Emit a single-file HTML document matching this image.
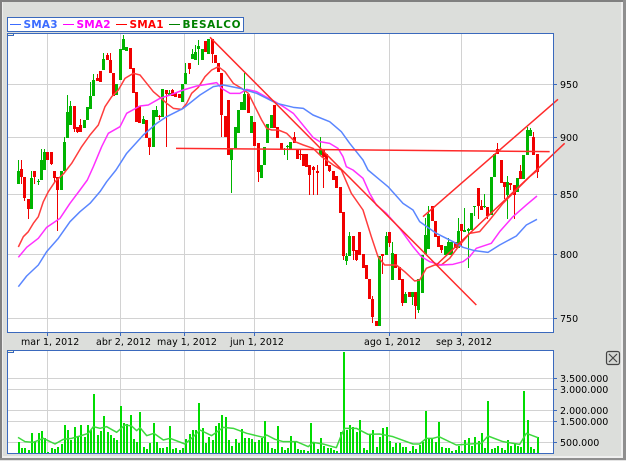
<!DOCTYPE html>
<html><head><meta charset="utf-8"><style>
html,body{margin:0;padding:0;width:626px;height:461px;overflow:hidden;background:#dcdedb}
svg{display:block}
text{font-family:"DejaVu Sans",sans-serif;font-size:9.5px;fill:#000}
.l text{font-size:10.5px;font-weight:bold}
</style></head><body>
<svg width="626" height="461" viewBox="0 0 626 461" xmlns="http://www.w3.org/2000/svg">
<rect width="626" height="461" fill="#dcdedb"/>
<g shape-rendering="crispEdges">
<rect x="0" y="0" width="626" height="2" fill="#808080"/>
<rect x="0" y="0" width="2" height="460" fill="#808080"/>
<rect x="2" y="2" width="1" height="455" fill="#eeeeee"/>
<rect x="621" y="2" width="2" height="456" fill="#efefef"/>
<rect x="623" y="0" width="3" height="460" fill="#8f8f8f"/>
<rect x="2" y="456" width="621" height="2" fill="#efefef"/>
<rect x="0" y="458" width="626" height="2" fill="#8f8f8f"/>
<rect x="0" y="460" width="626" height="1" fill="#e4e4e4"/>
<!-- legend -->
<rect x="7.5" y="17.5" width="236" height="14" fill="#fff" stroke="#3a69bd"/>
<!-- main panel -->
<rect x="7.5" y="33.5" width="546" height="298.5" fill="#fff"/>
<rect x="7.5" y="350.5" width="546" height="103" fill="#fff"/>
<path stroke="#d2d2d2" fill="none" d="M47.5 34V332M120.5 34V332M184.5 34V332M254.5 34V332M389.5 34V332M461.5 34V332M8 84.5H553M8 137.5H553M8 194.5H553M8 254.5H553M8 318.5H553"/>
<path stroke="#d2d2d2" fill="none" d="M47.5 351V453M120.5 351V453M184.5 351V453M254.5 351V453M389.5 351V453M461.5 351V453M8 378.5H553M8 389.5H553M8 410.5H553M8 421.5H553M8 442.5H553"/>
<!-- volume bars -->
<path stroke="#00dc00" stroke-width="2" fill="none" d="M19 453V442M22 453V448M25 453V448M29 453V450M32 453V433M35 453V441M39 453V433M42 453V431M45 453V438M48 453V452M52 453V448M55 453V449M58 453V447M62 453V444M65 453V425M68 453V430M71 453V440M75 453V427M78 453V437M81 453V425M85 453V437M88 453V425M91 453V430M94 453V394M98 453V435M101 453V431M104 453V416M108 453V432M111 453V435M114 453V438M117 453V440M121 453V406M124 453V423M127 453V424M131 453V415M134 453V439M137 453V442M140 453V412M144 453V447M147 453V449M150 453V443M154 453V423M157 453V442M160 453V448M163 453V448M167 453V447M170 453V426M173 453V449M176 453V448M180 453V450M183 453V448M186 453V439M190 453V434M193 453V430M196 453V430M199 453V403M203 453V428M206 453V443M209 453V437M213 453V440M216 453V426M219 453V423M222 453V415M226 453V417M229 453V440M232 453V446M236 453V439M239 453V443M242 453V429M245 453V438M249 453V438M252 453V439M255 453V442M259 453V440M262 453V438M265 453V421M268 453V442M272 453V448M275 453V449M278 453V426M282 453V447M285 453V450M288 453V448M291 453V436M295 453V442M298 453V449M301 453V450M304 453V450M308 453V451M311 453V423M314 453V442M318 453V449M321 453V438M324 453V446M328 453V448M331 453V448M334 453V450M337 453V451M341 453V432M344 453V352M347 453V430M350 453V425M353 453V427M357 453V432M360 453V420M364 453V448M367 453V450M370 453V434M373 453V430M377 453V447M380 453V437M383 453V428M387 453V427M390 453V441M393 453V447M396 453V443M400 453V443M403 453V447M406 453V447M410 453V451M413 453V446M416 453V449M420 453V445M423 453V442M426 453V411M429 453V438M432 453V438M436 453V442M439 453V422M442 453V447M446 453V448M449 453V448M452 453V451M456 453V450M459 453V446M462 453V451M465 453V440M469 453V438M472 453V446M475 453V437M479 453V441M482 453V433M485 453V448M488 453V401M492 453V449M495 453V448M498 453V446M502 453V448M505 453V450M508 453V440M511 453V446M515 453V443M518 453V446M521 453V447M524 453V391M528 453V420M531 453V447M534 453V449M538 453V437"/>
<!-- wicks green -->
<path stroke="#00b400" stroke-width="1" fill="none" d="M18.5 160V184M31.5 171V209M38.5 179V185M41.5 149V180M44.5 149V170M61.5 171V190M64.5 137V171M67.5 95V138M70.5 101V125M84.5 120V128M87.5 107V120M90.5 82V109M93.5 74V96M103.5 53V70M116.5 84V95M120.5 49V80M123.5 35V50M126.5 47V51M143.5 116V124M153.5 110V147M156.5 106V117M162.5 89V117M169.5 90V95M182.5 84V102M185.5 63V84M192.5 49V59M195.5 45V60M198.5 40V65M202.5 49V60M208.5 39V54M231.5 148V193M235.5 127V148M238.5 110V133M241.5 102V110M244.5 73V110M251.5 116V133M261.5 165V178M264.5 147V165M267.5 124V143M271.5 115V128M284.5 148V155M287.5 145V160M290.5 142V149M320.5 137V155M346.5 253V265M349.5 232V256M379.5 256V326M386.5 232V255M392.5 242V280M405.5 292V303M412.5 292V305M418.5 279V313M422.5 255V293M425.5 218V254M428.5 206V249M445.5 246V255M448.5 238V255M451.5 242V255M458.5 218V248M464.5 208V232M468.5 228V268M471.5 213V230M474.5 206V216M484.5 194V208M491.5 177V215M494.5 154V177M507.5 176V219M517.5 178V192M523.5 155V179M527.5 127V155M530.5 128V136"/>
<!-- bodies green -->
<path stroke="#00b400" stroke-width="3" fill="none" d="M18.5 171V184M31.5 178V209M38.5 181V182M41.5 160V180M44.5 152V170M61.5 171V190M64.5 142V171M67.5 112V138M70.5 106V125M84.5 120V128M87.5 107V120M90.5 96V109M93.5 80V96M103.5 59V70M116.5 84V95M120.5 49V80M123.5 39V50M126.5 47V51M143.5 119V124M153.5 110V147M156.5 110V117M162.5 89V117M169.5 93V95M182.5 84V102M185.5 73V84M192.5 54V59M195.5 52V60M198.5 46V49M202.5 49V60M208.5 39V54M231.5 148V160M235.5 127V148M238.5 110V133M241.5 102V110M244.5 94V110M251.5 116V133M261.5 165V178M264.5 147V165M267.5 124V143M271.5 115V128M284.5 149V150M287.5 146V147M290.5 142V149M320.5 149V155M346.5 256V261M349.5 236V256M379.5 256V326M386.5 236V255M392.5 253V280M405.5 294V303M412.5 292V297M418.5 279V310M422.5 255V293M425.5 235V254M428.5 214V249M445.5 246V255M448.5 242V255M451.5 242V255M458.5 231V248M464.5 230V232M468.5 229V231M471.5 213V230M474.5 206V207M484.5 206V207M491.5 177V215M494.5 154V177M507.5 182V195M517.5 178V192M523.5 155V179M527.5 130V155M530.5 130V136"/>
<!-- wicks red -->
<path stroke="#f00000" stroke-width="1" fill="none" d="M21.5 160V184M24.5 177V201M28.5 199V219M34.5 171V184M47.5 152V160M51.5 152V165M54.5 171V183M57.5 177V231M74.5 106V132M77.5 127V133M80.5 119V132M97.5 74V81M100.5 71V82M107.5 53V60M110.5 53V73M113.5 73V96M130.5 48V69M133.5 68V93M136.5 92V122M139.5 106V123M146.5 120V138M149.5 138V155M159.5 115V120M166.5 90V147M172.5 89V96M175.5 93V97M179.5 94V98M189.5 63V74M205.5 41V52M212.5 39V63M215.5 55V63M218.5 63V72M221.5 73V137M225.5 116V137M228.5 100V155M248.5 94V113M254.5 122V146M258.5 143V182M274.5 105V128M277.5 127V138M281.5 143V149M294.5 132V143M297.5 149V159M300.5 150V160M303.5 154V166M306.5 154V167M309.5 165V195M313.5 166V195M317.5 165V195M323.5 149V188M326.5 154V166M329.5 165V172M333.5 171V180M336.5 176V188M340.5 187V213M343.5 212V260M353.5 236V260M356.5 250V261M359.5 232V255M363.5 254V268M366.5 265V279M369.5 279V299M372.5 296V323M376.5 321V326M382.5 254V274M389.5 232V247M395.5 254V268M399.5 267V280M402.5 279V306M409.5 292V297M415.5 292V319M432.5 206V221M435.5 221V237M438.5 236V247M441.5 245V253M455.5 242V248M461.5 224V246M478.5 188V219M481.5 200V210M487.5 207V219M497.5 143V154M501.5 160V183M504.5 182V199M510.5 183V190M514.5 185V219M520.5 165V179M533.5 132V155M537.5 154V178"/>
<!-- bodies red -->
<path stroke="#f00000" stroke-width="3" fill="none" d="M21.5 169V177M24.5 177V198M28.5 199V209M34.5 171V177M47.5 152V160M51.5 152V164M54.5 171V178M57.5 177V190M74.5 106V129M77.5 127V132M80.5 125V132M97.5 78V81M100.5 71V82M107.5 55V60M110.5 60V73M113.5 73V96M130.5 48V69M133.5 68V93M136.5 92V122M139.5 106V123M146.5 120V138M149.5 138V147M159.5 116V117M166.5 90V94M172.5 90V96M175.5 93V97M179.5 94V98M189.5 63V69M205.5 41V52M212.5 39V54M215.5 55V63M218.5 63V72M221.5 73V115M225.5 116V137M228.5 100V155M248.5 94V113M254.5 122V146M258.5 143V172M274.5 105V128M277.5 127V138M281.5 143V149M294.5 137V143M297.5 149V159M300.5 154V155M303.5 154V166M306.5 154V167M309.5 165V175M313.5 167V170M317.5 171V173M323.5 149V157M326.5 154V166M329.5 165V171M333.5 171V180M336.5 176V188M340.5 187V213M343.5 212V256M353.5 236V251M356.5 250V260M359.5 232V255M363.5 254V268M366.5 265V279M369.5 279V299M372.5 299V317M376.5 321V326M382.5 254V256M389.5 232V243M395.5 254V268M399.5 267V280M402.5 279V303M409.5 292V297M415.5 292V306M432.5 206V221M435.5 221V237M438.5 236V247M441.5 245V250M455.5 242V248M461.5 224V231M478.5 188V206M481.5 206V210M487.5 207V216M497.5 149V154M501.5 160V183M504.5 182V187M510.5 183V185M514.5 185V195M520.5 171V179M533.5 137V155M537.5 154V172"/>
</g>
<!-- lines -->
<g transform="scale(.33333)" fill="none" stroke-width="4.5" stroke-linejoin="round">
<g stroke="#ff3c3c">
<polyline points="55,741 70,710 85,695 100,670 115,650 130,605 145,575 165,545 190,522 215,490 245,440 270,405 295,375 315,320 335,290 355,270 375,235 400,220 420,225 440,250 460,275 480,292 500,310 520,325 545,328 560,310 575,280 595,262 615,230 635,210 655,200 675,215 700,250 725,265 745,280 765,320 785,360 800,385 815,390 835,390 860,400 885,425 910,435 939,445 965,470 1000,495 1024,510 1054,580 1089,630 1114,710 1134,770 1154,795 1189,795 1214,815 1244,843 1259,840 1279,805 1304,795 1324,795 1349,775 1379,735 1409,700 1439,695 1469,660 1509,610 1549,570 1589,530 1614,510"/>
</g>
<g stroke="#ff30ff">
<polyline points="55,772 80,742 115,715 140,682 180,655 210,610 240,570 262,540 280,500 305,440 325,400 360,380 380,340 420,318 445,315 480,295 510,285 550,270 590,258 620,253 650,248 665,265 690,280 720,280 740,268 770,275 800,292 825,305 850,320 880,340 939,412 959,425 989,430 1014,445 1029,470 1039,500 1059,510 1089,535 1109,580 1129,615 1159,640 1199,685 1239,740 1264,770 1289,785 1324,795 1359,793 1389,785 1409,770 1429,745 1474,730 1499,695 1539,650 1579,615 1611,588"/>
</g>
<g stroke="#5a86ff">
<polyline points="55,860 80,828 115,795 140,755 175,715 210,665 240,635 270,610 300,575 320,545 348,510 380,460 430,405 470,370 500,350 550,325 600,285 640,260 670,255 720,265 770,280 830,310 880,322 910,325 939,345 989,365 1024,395 1049,430 1089,480 1104,510 1164,560 1209,610 1239,630 1259,665 1309,700 1359,725 1389,742 1424,752 1464,757 1499,735 1549,708 1579,675 1611,658"/>
</g>
<g stroke="#ff2a2a">
<line x1="630" y1="112" x2="1429" y2="915"/>
<line x1="528" y1="445" x2="1649" y2="455"/>
<line x1="1269" y1="650" x2="1674" y2="298"/>
<line x1="1309" y1="795" x2="1694" y2="430"/>
</g>
<g stroke="#3ed83e">
<polyline points="54,1312 75,1325 100,1327 130,1315 165,1332 190,1318 215,1315 240,1308 265,1300 280,1280 300,1285 320,1280 350,1297 375,1275 395,1278 410,1292 420,1283 440,1307 462,1300 490,1320 510,1315 555,1332 580,1310 600,1290 635,1307 670,1282 700,1285 740,1300 790,1312 800,1305 825,1318 850,1325 890,1325 925,1340 939,1327 969,1332 1009,1343 1024,1305 1034,1285 1069,1285 1104,1303 1139,1302 1179,1310 1239,1332 1259,1332 1279,1315 1299,1315 1317,1310 1369,1335 1409,1332 1444,1330 1464,1308 1509,1325 1559,1333 1579,1300 1614,1313"/>
</g>
</g>
<g shape-rendering="crispEdges">
<rect x="7" y="33" width="547" height="1" fill="#3a69bd"/>
<rect x="7" y="33" width="1" height="300" fill="#3a69bd"/>
<rect x="553" y="33" width="1" height="300" fill="#3a69bd"/>
<rect x="7" y="332" width="547" height="1" fill="#3a69bd"/>
<rect x="7" y="350" width="547" height="1" fill="#3a69bd"/>
<rect x="7" y="350" width="1" height="104" fill="#3a69bd"/>
<rect x="553" y="350" width="1" height="104" fill="#3a69bd"/>
<rect x="7" y="453" width="547" height="1" fill="#3a69bd"/>
<rect x="8" y="34" width="5" height="1" fill="#f8f4d8"/><rect x="8" y="35" width="6" height="1" fill="#3a69bd"/><rect x="13" y="34" width="1" height="2" fill="#3a69bd"/>
<rect x="8" y="351" width="5" height="1" fill="#f8f4d8"/><rect x="8" y="352" width="6" height="1" fill="#3a69bd"/><rect x="13" y="351" width="1" height="2" fill="#3a69bd"/>
<path stroke="#3a69bd" fill="none" d="M554 84.5h3M554 137.5h3M554 194.5h3M554 254.5h3M554 318.5h3M554 378.5h3M554 389.5h3M554 410.5h3M554 421.5h3M554 442.5h3M47.5 333v3M120.5 333v3M184.5 333v3M254.5 333v3M389.5 333v3M461.5 333v3"/>
<path stroke="#3c6cff" d="M10 24.5h11"/>
<path stroke="#ff00ff" d="M63 24.5h11"/>
<path stroke="#ff0000" d="M116 24.5h11"/>
<path stroke="#008000" d="M169 24.5h11"/>
</g>
<g class="l">
<text x="23.5" y="28" style="fill:#3c6cff" textLength="34">SMA3</text>
<text x="76.5" y="28" style="fill:#ff00ff" textLength="34">SMA2</text>
<text x="129.5" y="28" style="fill:#ff0000" textLength="34">SMA1</text>
<text x="182.5" y="28" style="fill:#008000" textLength="58">BESALCO</text>
</g>
<text x="560" y="88">950</text>
<text x="560" y="141">900</text>
<text x="560" y="198">850</text>
<text x="560" y="258">800</text>
<text x="560" y="322">750</text>
<text x="21" y="345">mar 1, 2012</text>
<text x="96" y="345">abr 2, 2012</text>
<text x="157" y="345">may 1, 2012</text>
<text x="230" y="345">jun 1, 2012</text>
<text x="364" y="345">ago 1, 2012</text>
<text x="436" y="345">sep 3, 2012</text>
<text x="560" y="382">3.500.000</text>
<text x="560" y="393">3.000.000</text>
<text x="560" y="414">2.000.000</text>
<text x="560" y="425">1.500.000</text>
<text x="560" y="446">500.000</text>
<!-- close button -->
<rect x="606.5" y="351.5" width="13" height="13" rx="2" fill="#d4d6d3" stroke="#444" stroke-width="1.2"/>
<path d="M609 354l8 8M617 354l-8 8" stroke="#444" stroke-width="1.2" fill="none"/>
</svg>
</body></html>
